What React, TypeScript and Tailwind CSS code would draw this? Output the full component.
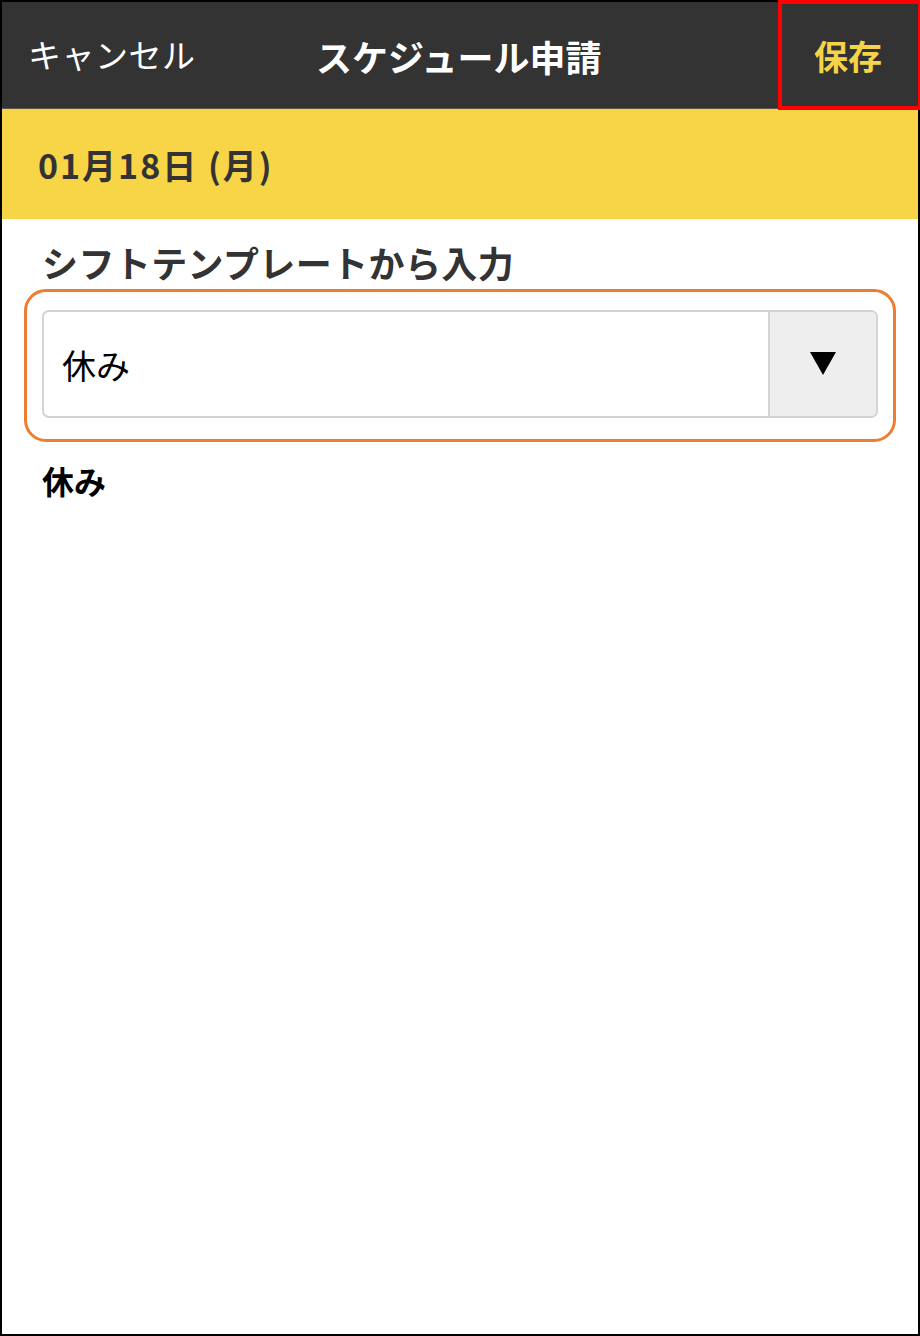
import React from 'react';

export default function App() {
  return (
    <div
      className="relative w-[920px] h-[1336px] border-2 border-black bg-white"
      style={{ fontFamily: '"Noto Sans CJK JP", "Noto Sans", sans-serif' }}
    >
      {/* header */}
      <div className="relative h-[107px] bg-[#333333] flex items-center justify-between border-b border-[#5a5447]">
        <span className="pl-[26px] text-[33px] tracking-[0.5px] text-white">キャンセル</span>
        <span className="absolute left-[314px] top-[28px] text-[36px] font-bold text-white leading-[52px]">スケジュール申請</span>
        <span className="pr-[36px] text-[34px] font-bold text-[#f6d447]">保存</span>
      </div>
      {/* annotation around save */}
      <div className="absolute left-[776px] top-[-2px] w-[144px] h-[110px] border-[4px] border-[#ff0000]" />

      {/* date band */}
      <div className="h-[110px] bg-[#f7d547] flex items-center pl-[36px]">
        <span className="text-[34px] font-bold tracking-[2px] text-[#333333]">01月18日 (月)</span>
      </div>

      {/* body */}
      <div className="px-[40px] pt-[18px]">
        <div className="text-[36px] font-bold tracking-[0.4px] text-[#333333] leading-[50px]">シフトテンプレートから入力</div>
        <div className="mt-[2px] -mx-[18px] border-[3px] border-[#ed7d31] rounded-[22px] px-[15px] pt-[18px] pb-[21px]">
          <div className="flex h-[108px] border-2 border-[#d4d4d4] rounded-[7px] overflow-hidden">
            <div className="flex-1 flex items-center pl-[18px] text-[34px] text-black">休み</div>
            <div className="w-[108px] bg-[#eeeeee] border-l-2 border-[#d4d4d4] flex items-center justify-center">
              <svg width="26" height="24" viewBox="0 0 26 24">
                <polygon points="0,0 26,0 13,23" fill="#000" />
              </svg>
            </div>
          </div>
        </div>
        <div className="mt-[16px] text-[32px] font-bold text-black leading-[44px]">休み</div>
      </div>
    </div>
  );
}
